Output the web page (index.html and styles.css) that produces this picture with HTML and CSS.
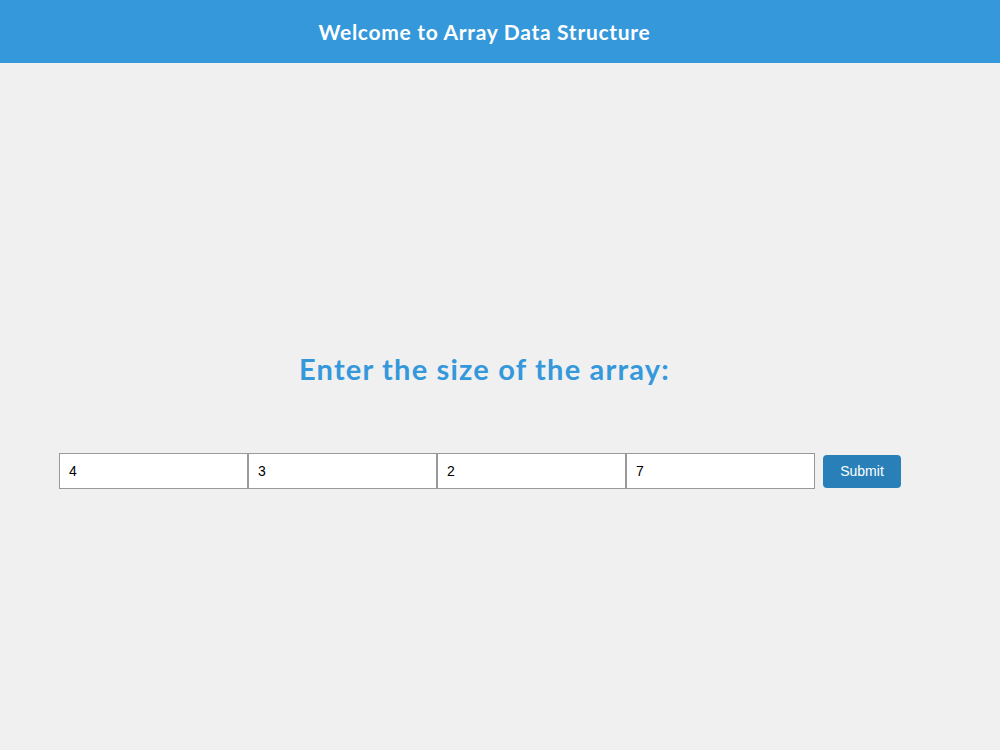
FILE: index.html
```html
<!DOCTYPE html>
<html>
<head>
<meta charset="utf-8">
<link rel="stylesheet" href="styles.css">
</head>
<body>
<header class="topbar">
  <h1 class="topbar-title">Welcome to Array Data Structure</h1>
</header>
<main class="main">
  <h2 class="prompt">Enter the size of the array:</h2>
  <form class="array-row">
    <div class="inputs">
      <input class="cell" type="text" value="4">
      <input class="cell" type="text" value="3">
      <input class="cell" type="text" value="2">
      <input class="cell" type="text" value="7">
    </div>
    <button class="submit" type="button">Submit</button>
  </form>
</main>
</body>
</html>
```
FILE: styles.css
```css
html, body {
  margin: 0;
  padding: 0;
  background: #f0f0f0;
  height: 100%;
}
body {
  font-family: "Lato", "Liberation Sans", sans-serif;
}
.topbar {
  background: #3498db;
  height: 63px;
  width: 969px;
  display: flex;
  align-items: center;
  justify-content: center;
  box-shadow: 31px 0 0 #3498db;
}
.topbar-title {
  margin: 0;
  color: #fff;
  font-size: 21px;
  font-weight: 700;
  letter-spacing: 0.7px;
}
.main {
  width: 969px;
  display: flex;
  flex-direction: column;
  align-items: center;
}
.prompt {
  margin: 286px 0 0;
  color: #3498db;
  font-size: 29px;
  font-weight: 700;
  line-height: 40px;
  letter-spacing: 1.2px;
}
.array-row {
  margin-top: 64px;
  align-self: flex-start;
  margin-left: 59px;
  display: flex;
  align-items: center;
  gap: 8px;
}
.inputs {
  display: flex;
}
.cell {
  box-sizing: border-box;
  width: 189px;
  height: 36px;
  margin: 0;
  padding: 0 9px;
  border: 1px solid #999;
  background: #fff;
  font-family: "Liberation Sans", Arial, sans-serif;
  font-size: 14px;
  color: #000;
}
.submit {
  box-sizing: border-box;
  width: 78px;
  height: 33px;
  border: none;
  border-radius: 4px;
  background: #2980b9;
  color: #fff;
  font-family: "Liberation Sans", Arial, sans-serif;
  font-size: 14px;
}
```
